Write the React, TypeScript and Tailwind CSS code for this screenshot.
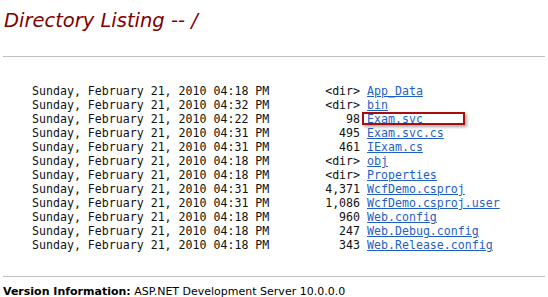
const files = [
  { time: "04:18", size: "<dir>", name: "App_Data" },
  { time: "04:32", size: "<dir>", name: "bin" },
  { time: "04:22", size: "98", name: "Exam.svc" },
  { time: "04:31", size: "495", name: "Exam.svc.cs" },
  { time: "04:31", size: "461", name: "IExam.cs" },
  { time: "04:18", size: "<dir>", name: "obj" },
  { time: "04:18", size: "<dir>", name: "Properties" },
  { time: "04:31", size: "4,371", name: "WcfDemo.csproj" },
  { time: "04:31", size: "1,086", name: "WcfDemo.csproj.user" },
  { time: "04:18", size: "960", name: "Web.config" },
  { time: "04:18", size: "247", name: "Web.Debug.config" },
  { time: "04:18", size: "343", name: "Web.Release.config" },
];

export default function App() {
  return (
    <div className="w-[548px] h-[297px] overflow-hidden bg-white text-black">
      <h1
        className="pt-[9px] pl-[4px] text-[19.5px] leading-[24px] italic text-[#800000]"
        style={{ fontFamily: '"DejaVu Sans", Verdana, sans-serif' }}
      >
        Directory Listing -- /
      </h1>

      <hr className="mt-[23px] mx-[3px] border-0 border-t border-[#c0c0c0]" />

      <div className="relative mt-[27px]">
        <pre
          className="pl-[32px] text-[11.6px] leading-[14px] text-[#111]"
          style={{ fontFamily: '"DejaVu Sans Mono", monospace' }}
        >
          {files.map((f) => (
            <div key={f.name}>
              {"Sunday, February 21, 2010 " + f.time + " PM" + f.size.padStart(13, " ") + " "}
              <a href="#" className="text-[#1f5fc4] underline">
                {f.name}
              </a>
            </div>
          ))}
        </pre>
        <div className="absolute left-[362px] top-[28px] w-[103px] h-[13px] border-2 border-[#a80d0d] shadow-[2px_2px_3px_rgba(0,0,0,0.35)]" />
      </div>

      <hr className="mt-[24px] mx-[3px] border-0 border-t border-[#c0c0c0]" />

      <p
        className="mt-[8px] pl-[3px] text-[11px] leading-[14px] text-black"
        style={{ fontFamily: '"DejaVu Sans", Verdana, sans-serif' }}
      >
        <b>Version Information:</b> ASP.NET Development Server 10.0.0.0
      </p>
    </div>
  );
}
